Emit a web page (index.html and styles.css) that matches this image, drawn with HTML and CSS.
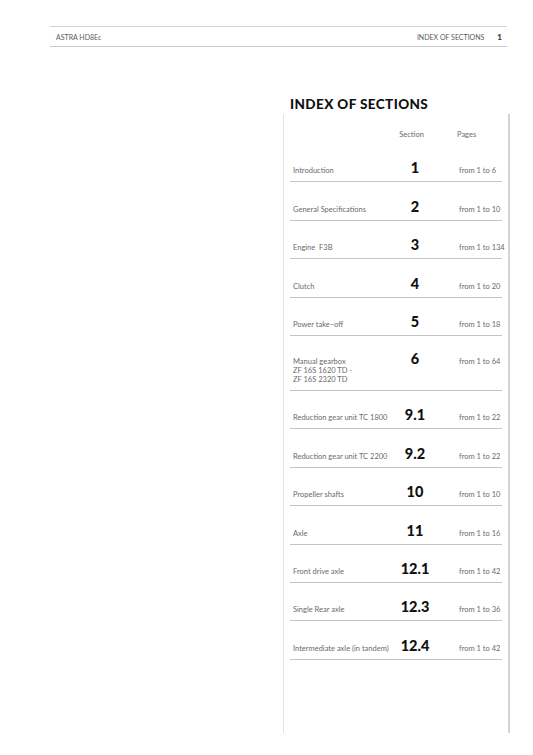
FILE: index.html
```html
<!DOCTYPE html>
<html lang="en">
<head>
<meta charset="utf-8">
<title>Index of sections</title>
<link rel="stylesheet" href="styles.css">
</head>
<body>
<header class="topbar">
  <span class="doc">ASTRA HD8Ec</span>
  <span class="where"><span>INDEX OF SECTIONS</span><b class="pno">1</b></span>
</header>

<main class="content">
  <h1 class="title">INDEX OF SECTIONS</h1>
  <section class="panel">
    <div class="head">
      <span></span>
      <span class="hsec">Section</span>
      <span class="hpg">Pages</span>
    </div>
    <div class="row"><span class="lbl">Introduction</span><span class="num">1</span><span class="pg">from 1 to 6</span></div>
    <div class="row"><span class="lbl">General Specifications</span><span class="num">2</span><span class="pg">from 1 to 10</span></div>
    <div class="row"><span class="lbl">Engine&nbsp; F3B</span><span class="num">3</span><span class="pg">from 1 to 134</span></div>
    <div class="row"><span class="lbl">Clutch</span><span class="num">4</span><span class="pg">from 1 to 20</span></div>
    <div class="row"><span class="lbl">Power take–off</span><span class="num">5</span><span class="pg">from 1 to 18</span></div>
    <div class="row tall"><span class="lbl">Manual gearbox<br>ZF 16S 1620 TD -<br>ZF 16S 2320 TD</span><span class="num">6</span><span class="pg">from 1 to 64</span></div>
    <div class="row"><span class="lbl">Reduction gear unit TC 1800</span><span class="num">9.1</span><span class="pg">from 1 to 22</span></div>
    <div class="row"><span class="lbl">Reduction gear unit TC 2200</span><span class="num">9.2</span><span class="pg">from 1 to 22</span></div>
    <div class="row"><span class="lbl">Propeller shafts</span><span class="num">10</span><span class="pg">from 1 to 10</span></div>
    <div class="row"><span class="lbl">Axle</span><span class="num">11</span><span class="pg">from 1 to 16</span></div>
    <div class="row"><span class="lbl">Front drive axle</span><span class="num">12.1</span><span class="pg">from 1 to 42</span></div>
    <div class="row"><span class="lbl">Single Rear axle</span><span class="num">12.3</span><span class="pg">from 1 to 36</span></div>
    <div class="row"><span class="lbl">Intermediate axle (in tandem)</span><span class="num">12.4</span><span class="pg">from 1 to 42</span></div>
  </section>
</main>
</body>
</html>
```

FILE: styles.css
```css
* { box-sizing: border-box; }

html, body {
  margin: 0;
  padding: 0;
  background: #ffffff;
}

body {
  width: 533px;
  height: 755px;
  overflow: hidden;
  font-family: Lato, "Open Sans", "Liberation Sans", sans-serif;
  color: #555555;
}

.topbar {
  margin: 26px 0 0 50px;
  width: 457px;
  height: 21px;
  border-top: 1px solid #d2d2d2;
  border-bottom: 1px solid #c8c8c8;
  display: flex;
  align-items: center;
  justify-content: space-between;
  padding: 0 5px 0 6px;
  font-size: 7px;
  color: #5a5a5a;
}

.where {
  display: flex;
  align-items: center;
  gap: 13px;
}

.pno {
  font-weight: 900;
  font-size: 8px;
  color: #333333;
}

.content {
  margin-left: 283px;
  width: 227px;
}

.title {
  margin: 49px 0 0 7px;
  font-size: 13.5px;
  font-weight: 900;
  line-height: 16px;
  color: #111111;
  letter-spacing: 0.4px;
}

.panel {
  margin-top: 2px;
  height: 619px;
  border-left: 1px solid #e2e2e2;
  border-right: 2px solid #d4d4d4;
  padding: 0 6px 0 6px;
}

.head,
.row {
  display: grid;
  grid-template-columns: 100px 44px 1fr;
  padding-left: 3px;
  font-size: 7.5px;
  line-height: 9px;
  color: #6a6a6a;
}

.head {
  height: 30px;
  align-content: end;
  padding-bottom: 5px;
}

.hsec {
  text-align: center;
  margin-left: -7px;
}

.hpg {
  padding-left: 20px;
}

.row {
  height: 38.4px;
  align-content: end;
  align-items: baseline;
  padding-bottom: 6px;
  border-bottom: 1px solid #c4c4c4;
}

.row.tall {
  height: 55px;
}

.num {
  text-align: center;
  font-size: 14.5px;
  line-height: 14px;
  font-weight: 900;
  color: #111111;
}

.pg {
  padding-left: 22px;
  white-space: nowrap;
}
```
